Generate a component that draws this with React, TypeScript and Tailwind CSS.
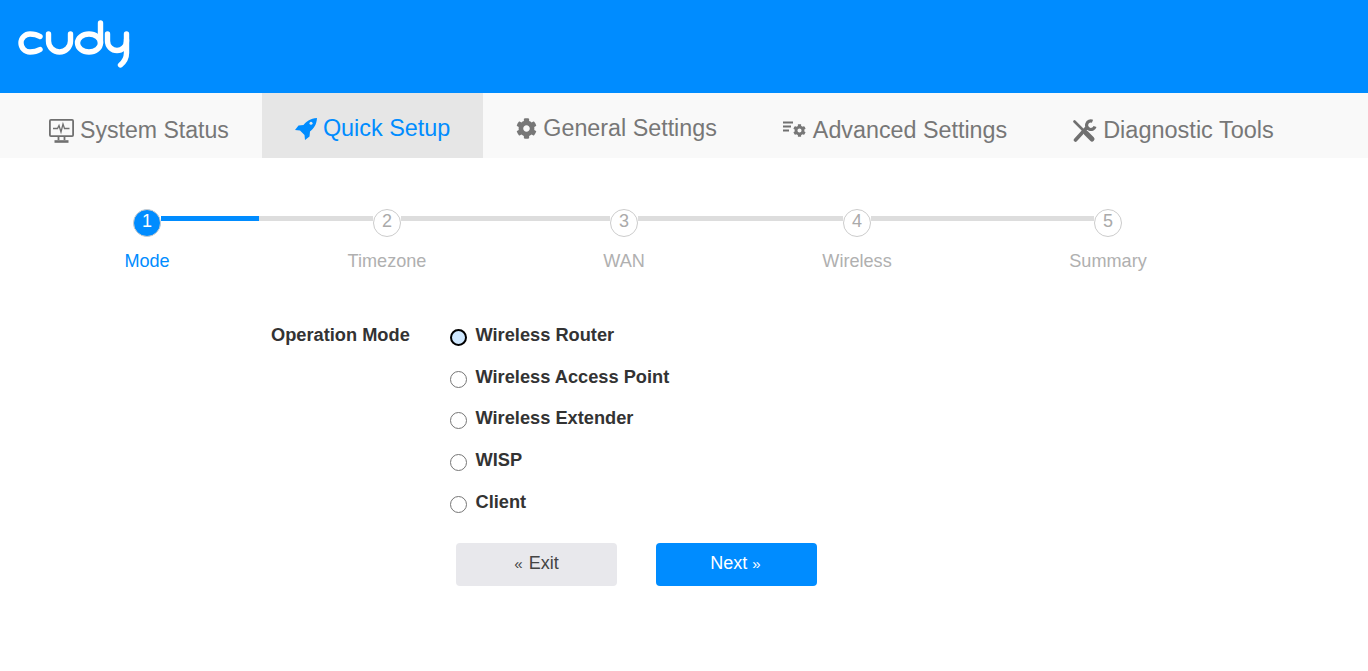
import { FaCog } from 'react-icons/fa';

const font = 'font-["Liberation_Sans",Arial,sans-serif]';

function MonitorIcon() {
  return (
    <svg width="25" height="24" viewBox="0 0 25 24" fill="none" stroke="#707070" strokeWidth="1.8">
      <rect x="0.9" y="0.9" width="23.2" height="16.2" rx="1" />
      <path d="M4 9.5h4.5l1.5-3 2 6.5 2-8 1.5 4.5h5" strokeWidth="1.3" />
      <path d="M9.5 18v3M15.5 18v3" strokeWidth="1.8" />
      <path d="M5.5 22.5h14" strokeWidth="2.6" />
    </svg>
  );
}

function RocketIcon() {
  return (
    <svg width="22" height="22" viewBox="0 0 22 22" className="block">
      <path
        d="M22 0C15 .5 12 3 8.5 7L3.5 7.5 0 12l5 .5 4.5 4.5.5 5 4.5-3.5.5-5C19 10 21.5 7 22 0Z"
        fill="#008cff"
      />
      <circle cx="16" cy="5.2" r="1.5" fill="#e6e6e6" />
    </svg>
  );
}

function ToolsIcon() {
  return (
    <svg width="24" height="24" viewBox="1 0 24 24" fill="none" stroke="#707070" strokeLinecap="round" className="block">
      <path d="M2.5 2.5L12 12" strokeWidth="2.6" />
      <path d="M14 14L20 20" strokeWidth="5" />
      <path d="M3.5 21L14 9.5" strokeWidth="3.6" />
      <path d="M20.5 2.2A4.3 4.3 0 1 0 23 7.5" strokeWidth="3.2" strokeLinecap="butt" />
    </svg>
  );
}

function AdvancedIcon() {
  return (
    <span className="flex w-[24px] items-start">
      <svg width="10" height="12" viewBox="0 0 10 12" fill="none" stroke="#707070" strokeWidth="1.8" className="mt-[-4px]">
        <path d="M0 1.5h10M0 5.5h8M0 9.5h6" />
      </svg>
      <FaCog className="mt-[-1px] h-[13px] w-[13px]" />
    </span>
  );
}

function Logo() {
  return (
    <svg width="116" height="50" viewBox="0 0 116 50" fill="none" stroke="#fff" strokeWidth="5.4" strokeLinecap="round" className="block">
      <path d="M24 16.5Q20 14 14 14a9 9 0 0 0 0 18Q20 32 24 29.5" />
      <path d="M32.5 14V21a11 11 0 0 0 22 0V14" />
      <ellipse cx="73" cy="23" rx="11.5" ry="9" />
      <path d="M84.5 3V23" />
      <path d="M91.5 14V21a9.5 9.5 0 0 0 19 0V14" />
      <path d="M110.5 20V33Q110.5 40 104.5 45" />
    </svg>
  );
}

const tabs = [
  { label: 'System Status', icon: <MonitorIcon />, size: 'text-[23.1px]', shift: 'mt-[10px]' },
  { label: 'Quick Setup', icon: <RocketIcon />, active: true, size: 'text-[23.4px]', shift: 'mt-[6px]' },
  { label: 'General Settings', icon: <FaCog className="h-[21px] w-[21px]" />, size: 'text-[23.3px]', shift: 'mt-[6px]' },
  { label: 'Advanced Settings', icon: <AdvancedIcon />, size: 'text-[23.3px]', shift: 'mt-[10px]' },
  { label: 'Diagnostic Tools', icon: <ToolsIcon />, size: 'text-[23.5px]', shift: 'mt-[10px]' },
];

const steps = [
  { n: 1, label: 'Mode', gap: 212 },
  { n: 2, label: 'Timezone', gap: 209 },
  { n: 3, label: 'WAN', gap: 205 },
  { n: 4, label: 'Wireless', gap: 223 },
  { n: 5, label: 'Summary', gap: 0 },
];

const modes = ['Wireless Router', 'Wireless Access Point', 'Wireless Extender', 'WISP', 'Client'];

export default function App() {
  return (
    <div className={`${font} min-h-[671px] bg-white`}>
      <header className="h-[93px] bg-[#008cff] pl-[16px] pt-[20px]">
        <Logo />
      </header>

      <nav className="flex h-[65px] bg-[#f9f9f9] pl-[16px] text-[#777]">
        {tabs.map((t) => (
          <div
            key={t.label}
            className={`flex items-center gap-[6px] whitespace-nowrap px-[33px] ${t.size} ${t.active ? 'bg-[#e6e6e6] text-[#008cff]' : ''}`}
          >
            <span className={`flex items-center ${t.shift}`}>{t.icon}</span>
            <span className={t.shift}>{t.label}</span>
          </div>
        ))}
      </nav>

      {/* Steps */}
      <div className="flex pl-[133px] pt-[51px]">
        {steps.map((s, i) => (
          <div key={s.n} className="flex">
            <div className="flex w-[28px] flex-col items-center">
              <div
                className={`flex h-[28px] w-[28px] items-center justify-center rounded-full border pb-[3px] text-[18px] ${
                  i === 0 ? 'border-[#ccc] bg-[#008cff] text-white' : 'border-[#ccc] bg-white text-[#aaa]'
                }`}
              >
                {s.n}
              </div>
              <div className={`mt-[14px] whitespace-nowrap text-[18.1px] leading-[20px] ${i === 0 ? 'text-[#008cff]' : 'text-[#b0b0b0]'}`}>
                {s.label}
              </div>
            </div>
            {s.gap > 0 && (
              <div className="mt-[7px] h-[5px] bg-[#ddd]" style={{ width: s.gap }}>
                {i === 0 && <div className="h-full w-[98px] bg-[#008cff]" />}
              </div>
            )}
          </div>
        ))}
      </div>

      {/* Form */}
      <div className="flex pl-[271px] pt-[52px] text-[18.24px] font-bold text-[#333]">
        <div className="w-[179px] leading-[24px]">Operation Mode</div>
        <div className="flex flex-col gap-[17.7px]">
          {modes.map((m, i) => (
            <label key={m} className="flex h-[24px] items-start">
              <input
                type="radio"
                name="mode"
                readOnly
                className={`mt-[6px] h-[17px] w-[17px] appearance-none rounded-full border ${
                  i === 0 ? 'border-2 border-black bg-[#cfe8ff]' : 'border-[#767676] bg-white'
                }`}
              />
              <span className="ml-[8.5px] leading-[24px]">{m}</span>
            </label>
          ))}
        </div>
      </div>

      <div className="flex gap-[39px] pl-[456px] pt-[29px] text-[18px]">
        <button className="h-[43px] w-[161px] rounded-[4px] bg-[#e8e8ec] pb-[2px] text-[#444]">
          <span className="mr-[1px] text-[15px]">«</span> Exit
        </button>
        <button className="h-[43px] w-[161px] rounded-[4px] bg-[#008cff] pb-[2px] pr-[2px] text-white">
          Next <span className="text-[15px]">»</span>
        </button>
      </div>
    </div>
  );
}
